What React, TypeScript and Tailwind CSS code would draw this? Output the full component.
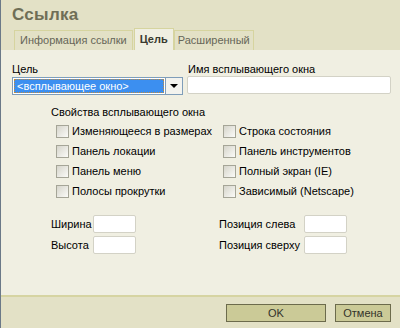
import React from 'react'

const font = { fontFamily: '"Liberation Sans", Arial, sans-serif' }

function Check({ label }: { label: string }) {
  return (
    <label className="flex items-center h-[20px] gap-[3px] whitespace-nowrap">
      <span className="w-[13px] h-[13px] border border-[#a5a597] bg-gradient-to-br from-[#d6d5cb] to-[#fbfbf8] shrink-0" />
      <span>{label}</span>
    </label>
  )
}

function Field({ label, w }: { label: string; w: string }) {
  return (
    <div className="flex items-center h-[20px] whitespace-nowrap">
      <span className={w}>{label}</span>
      <span className="w-[43px] h-[18px] bg-white border border-[#d3d2c6] rounded-[2px]" />
    </div>
  )
}

export default function App() {
  return (
    <div style={font} className="w-[400px] h-[328px] flex flex-col border-l border-[#6b7988] text-[11px] text-black overflow-hidden">
      <div className="h-[50px] bg-[#e3e1c6] flex flex-col justify-between pl-[11px]">
        <div className="text-[17px] font-bold text-[#6f6e56] leading-none pt-[6px] tracking-[0.3px]">Ссылка</div>
        <div className="flex items-end pl-[2px] whitespace-nowrap">
          <div className="h-[20px] px-[5px] border border-b-0 border-[#d6d49f] text-[#666658] flex items-center">Информация ссылки</div>
          <div className="h-[22px] px-[5px] ml-[1px] bg-[#f0efe2] border border-b-0 border-[#d6d49f] font-bold text-[#3a3a30] flex items-center">Цель</div>
          <div className="h-[20px] px-[3px] border border-b-0 border-[#d6d49f] text-[#666658] flex items-center">Расширенный</div>
        </div>
      </div>

      <div className="flex-1 bg-[#f0efe2] border-b-2 border-[#d6d4a2] pl-[11px] pr-[9px] pt-[13px]">
        <div className="flex gap-[4px]">
          <div className="flex flex-col w-[171px]">
            <span className="leading-[13px]">Цель</span>
            <div className="mt-[1px] h-[18px] flex border border-[#7f9db9] bg-white">
              <div className="flex-1 m-[1px] bg-[#3c8ff0] text-white border border-dotted border-[#c28a3a] flex items-center pl-[2px] leading-none whitespace-nowrap">&lt;всплывающее окно&gt;</div>
              <div className="w-[17px] border-l border-[#7f9db9] bg-[#f3f3ee] flex items-center justify-center">
                <span className="w-0 h-0 border-l-[4px] border-r-[4px] border-t-[4px] border-l-transparent border-r-transparent border-t-black" />
              </div>
            </div>
          </div>
          <div className="flex flex-col flex-1">
            <span className="leading-[13px] pl-[1px]">Имя всплывающего окна</span>
            <span className="h-[18px] bg-white border border-[#d3d2c6] rounded-[2px]" />
          </div>
        </div>

        <div className="pl-[39px] mt-[10px]">
          <div className="leading-[14px]">Свойства всплывающего окна</div>
          <div className="grid grid-cols-[167px_1fr] pl-[5px] mt-[2px]">
            <Check label="Изменяющееся в размерах" />
            <Check label="Строка состояния" />
            <Check label="Панель локации" />
            <Check label="Панель инструментов" />
            <Check label="Панель меню" />
            <Check label="Полный экран (IE)" />
            <Check label="Полосы прокрутки" />
            <Check label="Зависимый (Netscape)" />
          </div>
          <div className="grid grid-cols-[168px_1fr] mt-[13px] gap-y-[1px]">
            <Field label="Ширина" w="w-[42px]" />
            <Field label="Позиция слева" w="w-[85px]" />
            <Field label="Высота" w="w-[42px]" />
            <Field label="Позиция сверху" w="w-[85px]" />
          </div>
        </div>
      </div>

      <div className="h-[31px] bg-[#e3e1c6] flex items-start justify-end pt-[7px] pr-[9px] gap-[9px]">
        <button className="w-[100px] h-[18px] bg-[#cbca97] border border-[#6c6b4c] text-[#33332a] leading-none">OK</button>
        <button className="w-[56px] h-[18px] bg-[#cbca97] border border-[#6c6b4c] text-[#33332a] leading-none">Отмена</button>
      </div>
    </div>
  )
}
